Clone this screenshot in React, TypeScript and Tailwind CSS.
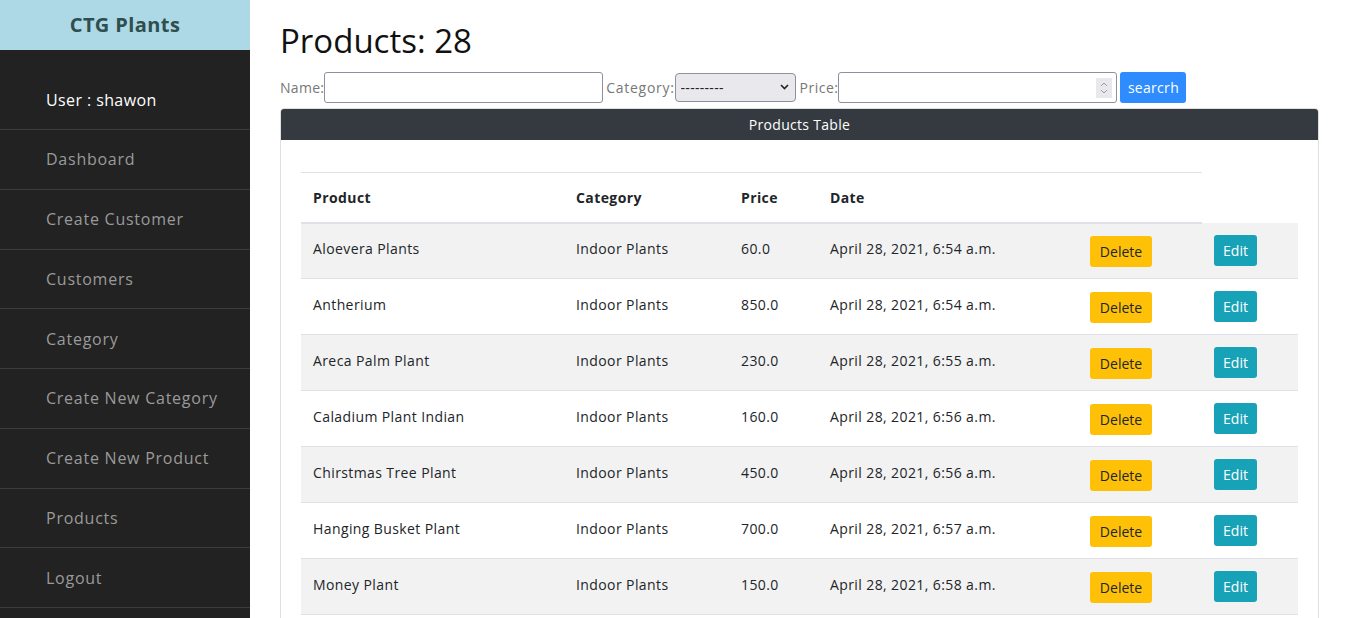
import React from 'react'

const products = [
  { name: 'Aloevera Plants', price: '60.0', date: 'April 28, 2021, 6:54 a.m.' },
  { name: 'Antherium', price: '850.0', date: 'April 28, 2021, 6:54 a.m.' },
  { name: 'Areca Palm Plant', price: '230.0', date: 'April 28, 2021, 6:55 a.m.' },
  { name: 'Caladium Plant Indian', price: '160.0', date: 'April 28, 2021, 6:56 a.m.' },
  { name: 'Chirstmas Tree Plant', price: '450.0', date: 'April 28, 2021, 6:56 a.m.' },
  { name: 'Hanging Busket Plant', price: '700.0', date: 'April 28, 2021, 6:57 a.m.' },
  { name: 'Money Plant', price: '150.0', date: 'April 28, 2021, 6:58 a.m.' },
]

const menu = [
  'Dashboard',
  'Create Customer',
  'Customers',
  'Category',
  'Create New Category',
  'Create New Product',
  'Products',
  'Logout',
]

const Sidebar: React.FC = () => (
  <aside className="w-[250px] shrink-0 bg-[#222222] min-h-screen">
    <div className="h-[50px] bg-[#add8e6] flex items-center justify-center">
      <h1 className="text-[20px] font-bold tracking-[0.4px] text-[#2f4f4f]">CTG Plants</h1>
    </div>
    <div className="pt-[20px] border-b border-[#3c3c3c]">
      <div className="h-[59px] flex items-center pl-[46px] text-white text-[16px] tracking-[0.4px]">User : shawon</div>
    </div>
    {menu.map((m) => (
      <div key={m} className="h-[59.75px] flex items-center pl-[46px] text-[16px] tracking-[0.75px] text-[#9a9a9a] border-b border-[#3c3c3c]">
        {m}
      </div>
    ))}
  </aside>
)

const SearchBar: React.FC = () => (
  <form className="flex items-center text-[14px] tracking-[0.3px] text-[#777777]" onSubmit={(e) => e.preventDefault()}>
    <label htmlFor="name">Name:</label>
    <input id="name" className="w-[279px] h-[31px] border border-[#8f8f9d] rounded-[3px] bg-white outline-none" />
    <label htmlFor="category" className="ml-[3px] tracking-[0.7px]">Category:</label>
    <div className="relative">
      <select
        id="category"
        className="appearance-none w-[121px] h-[29px] border border-[#8f8f9d] rounded-[4px] bg-[#e9e9ed] text-[#222] pl-[5px] text-[14px] outline-none"
      >
        <option>---------</option>
      </select>
      <svg className="absolute right-[7px] top-[11px] pointer-events-none" width="9" height="6" viewBox="0 0 9 6">
        <path d="M1 1l3.5 3.5L8 1" fill="none" stroke="#222" strokeWidth="1.6" />
      </svg>
    </div>
    <label htmlFor="price" className="ml-[4px] tracking-[0.5px]">Price:</label>
    <div className="relative">
      <input id="price" className="w-[279px] h-[31px] border border-[#8f8f9d] rounded-[3px] bg-white outline-none" />
      <div className="absolute right-[5px] top-[6px] w-[16px] h-[20px] bg-[#e9e9ed] flex flex-col items-center justify-center gap-[2px] pointer-events-none">
        <svg width="8" height="5" viewBox="0 0 8 5"><path d="M1 4l3-3 3 3" fill="none" stroke="#999" strokeWidth="1" /></svg>
        <svg width="8" height="5" viewBox="0 0 8 5"><path d="M1 1l3 3 3-3" fill="none" stroke="#999" strokeWidth="1" /></svg>
      </div>
    </div>
    <button type="submit" className="ml-[3px] h-[31px] w-[66px] rounded-[3px] bg-[#2f8cff] text-white text-[14px]">
      searcrh
    </button>
  </form>
)

const ProductsTable: React.FC = () => (
  <div className="mt-[5px] border border-[#dfdfdf] rounded-t-[4px]">
    <div className="h-[31px] bg-[#343a40] text-white text-[14px] tracking-[0.3px] flex items-center justify-center rounded-t-[3px]">
      Products Table
    </div>
    <div className="px-[20px] pt-[32px] pb-[20px]">
      <table className="w-full border-collapse text-[14px] tracking-[0.4px] text-[#212529]">
        <thead>
          <tr className="h-[50px]">
            <th className="w-[263px] text-left font-bold pl-[12px] border-t border-b-2 border-[#dee2e6]">Product</th>
            <th className="w-[165px] text-left font-bold pl-[12px] border-t border-b-2 border-[#dee2e6]">Category</th>
            <th className="w-[89px] text-left font-bold pl-[12px] border-t border-b-2 border-[#dee2e6]">Price</th>
            <th className="w-[260px] text-left font-bold pl-[12px] border-t border-b-2 border-[#dee2e6]">Date</th>
            <th className="w-[124px] border-t border-b-2 border-[#dee2e6]"></th>
          </tr>
        </thead>
        <tbody>
          {products.map((p, i) => (
            <tr key={p.name} className={`h-[56px] ${i % 2 === 0 ? 'bg-[#f2f2f2]' : 'bg-white'}`}>
              <td className="pl-[12px] pb-[4px] border-b border-[#dee2e6]">{p.name}</td>
              <td className="pl-[12px] pb-[4px] border-b border-[#dee2e6]">Indoor Plants</td>
              <td className="pl-[12px] pb-[4px] border-b border-[#dee2e6]">{p.price}</td>
              <td className="pl-[12px] pb-[4px] border-b border-[#dee2e6]">{p.date}</td>
              <td className="pl-[12px] border-b border-[#dee2e6]">
                <button className="mt-[1px] h-[31px] w-[62px] rounded-[3px] bg-[#ffc107] text-[#212529] tracking-normal">Delete</button>
              </td>
              <td className="w-[96px] pl-[12px] border-b border-[#dee2e6]">
                <button className="h-[31px] w-[43px] rounded-[3px] bg-[#17a2b8] text-white tracking-normal">Edit</button>
              </td>
            </tr>
          ))}
        </tbody>
      </table>
    </div>
  </div>
)

export default function App() {
  return (
    <div className="flex min-h-screen bg-white font-['Open_Sans',sans-serif]">
      <Sidebar />
      <main className="flex-1 pl-[30px] pr-[30px] pt-[22px]">
        <h2 className="text-[33px] leading-[38px] text-[#111] mb-[12px]">Products: 28</h2>
        <SearchBar />
        <ProductsTable />
      </main>
    </div>
  )
}
